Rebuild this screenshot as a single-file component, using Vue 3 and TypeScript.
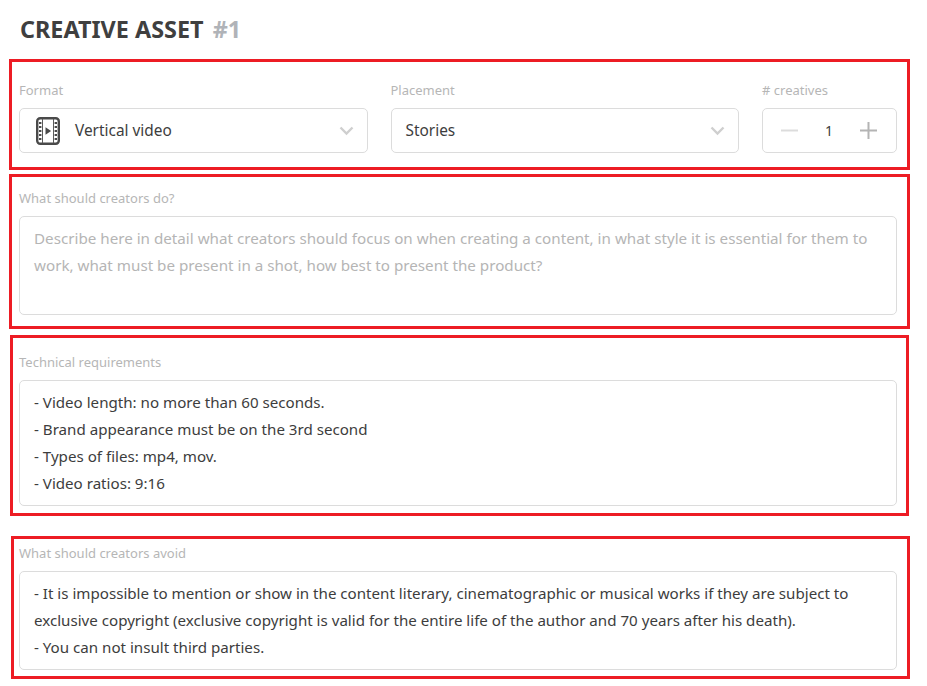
<script setup lang="ts">
const techLines: string[] = [
  '- Video length: no more than 60 seconds.',
  '- Brand appearance must be on the 3rd second',
  '- Types of files: mp4, mov.',
  '- Video ratios: 9:16',
]
const avoidLines: string[] = [
  '- It is impossible to mention or show in the content literary, cinematographic or musical works if they are subject to',
  'exclusive copyright (exclusive copyright is valid for the entire life of the author and 70 years after his death).',
  '- You can not insult third parties.',
]
</script>

<template>
  <main class="page">
    <h1 class="title">CREATIVE ASSET <span class="num">#1</span></h1>

    <section class="frame f1">
      <div class="row">
        <div class="col">
          <label class="lbl">Format</label>
          <div class="box select">
            <svg class="film" width="24" height="28" viewBox="0 0 24 28" aria-hidden="true">
              <rect x="1.2" y="1.2" width="21.6" height="25.6" rx="3" fill="none" stroke="#4a4a4a" stroke-width="2.4" />
              <path d="M6.5 2v24M17.5 2v24" stroke="#5a5a5a" stroke-width="1" />
              <path d="M3 6h2.4M3 10h2.4M3 14h2.4M3 18h2.4M3 22h2.4M18.6 6H21M18.6 10H21M18.6 14H21M18.6 18H21M18.6 22H21" stroke="#4a4a4a" stroke-width="2" />
              <path d="M9.5 10.2v7.6l5.6-3.8z" fill="#4a4a4a" />
            </svg>
            <span class="val">Vertical video</span>
            <svg class="chev" width="15" height="10" viewBox="0 0 15 10" aria-hidden="true"><path d="M1.5 1.5l6 6 6-6" fill="none" stroke="#cfcfcf" stroke-width="2.4" /></svg>
          </div>
        </div>
        <div class="col">
          <label class="lbl">Placement</label>
          <div class="box select plain">
            <span class="val">Stories</span>
            <svg class="chev" width="15" height="10" viewBox="0 0 15 10" aria-hidden="true"><path d="M1.5 1.5l6 6 6-6" fill="none" stroke="#cfcfcf" stroke-width="2.4" /></svg>
          </div>
        </div>
        <div class="col count">
          <label class="lbl">&#35; creatives</label>
          <div class="box stepper">
            <svg width="17" height="17" viewBox="0 0 17 17" aria-hidden="true"><path d="M0 8.5h17" stroke="#dcdcdc" stroke-width="2" /></svg>
            <span class="qty">1</span>
            <svg width="17" height="17" viewBox="0 0 17 17" aria-hidden="true"><path d="M0 8.5h17M8.5 0v17" stroke="#b4b4b4" stroke-width="2" /></svg>
          </div>
        </div>
      </div>
    </section>

    <section class="frame f2">
      <label class="lbl">What should creators do?</label>
      <div class="box area placeholder">Describe here in detail what creators should focus on when creating a content, in what style it is essential for them to work, what must be present in a shot, how best to present the product?</div>
    </section>

    <section class="frame f3">
      <label class="lbl">Technical requirements</label>
      <div class="box area">
        <div v-for="l in techLines" :key="l">{{ l }}</div>
      </div>
    </section>

    <section class="frame f4">
      <label class="lbl">What should creators avoid</label>
      <div class="box area">
        <div v-for="l in avoidLines" :key="l">{{ l }}</div>
      </div>
    </section>
  </main>
</template>

<style>
html, body { margin: 0; background: #fff; }
</style>

<style scoped>
.page {
  width: 927px;
  height: 686px;
  overflow: hidden;
  box-sizing: border-box;
  padding-top: 14px;
  font-family: "Noto Sans", "Open Sans", sans-serif;
  color: #3d3d3d;
}
.title {
  margin: 0 0 0 20px;
  height: 30px;
  line-height: 30px;
  font-size: 23.4px;
  font-weight: 700;
  color: #3f3f3f;
  white-space: nowrap;
}
.num { color: #b0b3b8; margin-left: 3px; }
.frame {
  box-sizing: border-box;
  border: 3px solid #ed1c24;
}
.f1 { margin: 15px 17px 0 9px; height: 111px; padding: 20px 10px 0 7px; }
.f2 { margin: 4px 17px 0 9px; height: 155px; padding: 13px 10px 0 7px; }
.f3 { margin: 6px 18px 0 10px; height: 181px; padding: 16px 9px 0 6px; }
.f4 { margin: 20px 17px 0 11px; height: 143px; padding: 6px 10px 0 5px; }
.row { display: flex; gap: 23px; }
.col { flex: 1 1 0; min-width: 0; }
.count { flex: 0 0 135px; }
.lbl {
  display: block;
  height: 16px;
  line-height: 16px;
  font-size: 13px;
  color: #b6b6b6;
  margin-bottom: 10px;
  white-space: nowrap;
}
.box {
  box-sizing: border-box;
  border: 1px solid #dcdcdc;
  border-radius: 5px;
  background: #fff;
}
.select {
  height: 45px;
  display: flex;
  align-items: center;
  padding: 0 13px 0 16px;
  font-size: 15.4px;
  color: #3d3d3d;
}
.select.plain { padding-left: 14px; }
.film { flex: none; margin-right: 15px; }
.val { flex: 1; }
.chev { flex: none; }
.stepper {
  height: 45px;
  display: flex;
  align-items: center;
  justify-content: space-between;
  padding: 0 19px 0 18px;
}
.qty { font-size: 14px; color: #3d3d3d; }
.area {
  padding: 8px 14px;
  font-size: 15.14px;
  line-height: 27px;
  color: #3d3d3d;
}
.f2 .area { height: 99px; }
.f3 .area { height: 126px; }
.f4 .area { height: 99px; }
.area.placeholder { color: #b5b5b5; font-size: 15.2px; }
</style>
